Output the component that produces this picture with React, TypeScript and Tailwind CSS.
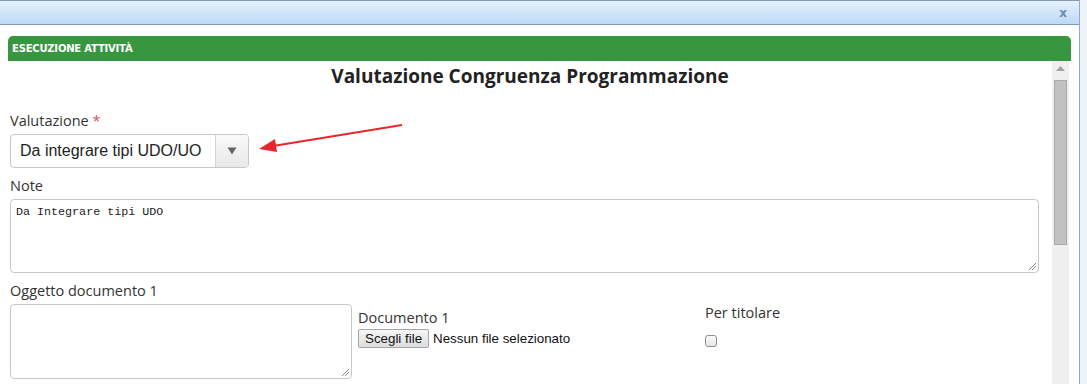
import React from 'react'

const labelFont = { fontFamily: '"Open Sans", "Noto Sans", sans-serif' }

export default function App() {
  return (
    <div className="w-[1087px] h-[384px] overflow-hidden bg-[#eef3fa]">
      <div className="w-[1080px] h-full bg-white border-r border-[#8fa9c6] flex flex-col">
        {/* Title bar */}
        <div className="h-[25px] shrink-0 border-t border-b border-[#7f9db9] bg-gradient-to-b from-[#e6f1fc] to-[#bcdaf8] flex items-center justify-end pr-[12px]">
          <span className="text-[12px] font-bold text-[#6b8bae] leading-none" style={{ fontFamily: '"DejaVu Sans", sans-serif' }}>x</span>
        </div>

        <div className="pl-2 pr-[8px] pt-[11px] flex-1 flex flex-col min-h-0">
          {/* Green panel header */}
          <div className="h-[25px] shrink-0 rounded-t-[5px] bg-[#37963f] flex items-center pl-[4px]">
            <span className="text-white text-[10px] font-bold tracking-[-0.2px]" style={{ fontFamily: '"DejaVu Sans", Verdana, sans-serif' }}>
              ESECUZIONE ATTIVITÀ
            </span>
          </div>

          <div className="flex flex-1 min-h-0">
            <div className="flex-1 pl-[2px] pr-[13px] text-[14.5px]" style={labelFont}>
              <h1 className="-mr-[11px] text-center text-[19px] leading-[28px] font-bold text-[#222] pt-[1px]" style={{ fontFamily: '"Open Sans", sans-serif' }}>
                Valutazione Congruenza Programmazione
              </h1>

              {/* Valutazione */}
              <div className="mt-[21px] leading-[20px] text-[#333]">
                Valutazione <span className="text-[#d9534f]">*</span>
              </div>
              <div className="relative mt-[3px] w-[239px]">
                <div className="h-[34px] rounded-[4px] border border-[#c8c8c8] flex items-stretch overflow-hidden">
                  <div className="flex-1 flex items-center pl-[9px] text-[16px] text-[#222]" style={{ fontFamily: '"Liberation Sans", Arial, sans-serif' }}>
                    Da integrare tipi UDO/UO
                  </div>
                  <div className="w-[33px] border-l border-[#d4d4d4] bg-gradient-to-b from-[#fafafa] to-[#e8e8e8] flex items-center justify-center">
                    <svg width="10" height="8" viewBox="0 0 10 8">
                      <path d="M0.5 0.5 L9.5 0.5 L5 7.5 Z" fill="#666" />
                    </svg>
                  </div>
                </div>
                {/* Red annotation arrow */}
                <svg className="absolute left-[245px] top-[-10px]" width="150" height="30" viewBox="0 0 150 30">
                  <line x1="147" y1="1" x2="18" y2="22" stroke="#e8262b" strokeWidth="2" />
                  <path d="M4 25 L20 15 L22 28 Z" fill="#e8262b" />
                </svg>
              </div>

              {/* Note */}
              <div className="mt-[8px] leading-[20px] text-[#333]">Note</div>
              <div className="relative mt-[3px] h-[74px] rounded-[4px] border border-[#c8c8c8] px-[5px] pt-[5px]">
                <div className="text-[11.7px] leading-[14px] text-[#222]" style={{ fontFamily: '"Liberation Mono", monospace' }}>Da Integrare tipi UDO</div>
                <ResizeGrip />
              </div>

              {/* Oggetto documento */}
              <div className="mt-[8px] leading-[20px] text-[#333]">Oggetto documento 1</div>
              <div className="mt-[3px] flex">
                <div className="relative w-[342px] h-[75px] rounded-[4px] border border-[#c8c8c8]">
                  <ResizeGrip />
                </div>
                <div className="ml-[6px] pt-[4px] w-[347px]">
                  <div className="leading-[20px] text-[#333]">Documento 1</div>
                  <div className="mt-[1px] flex items-center" style={{ fontFamily: '"Liberation Sans", Arial, sans-serif' }}>
                    <button className="h-[19px] px-[6px] text-[13.33px] leading-none text-[#111] border border-[#a6a6a6] rounded-[2px] bg-gradient-to-b from-[#f6f6f6] to-[#dddddd]">
                      Scegli file
                    </button>
                    <span className="ml-[4px] text-[13.33px] text-[#111]">Nessun file selezionato</span>
                  </div>
                </div>
                <div>
                  <div className="-mt-[1px] leading-[20px] text-[#333]">Per titolare</div>
                  <div className="mt-[12px] w-[12px] h-[12px] rounded-[3px] border border-[#8f8f8f] bg-gradient-to-b from-[#fcfcfc] to-[#e6e6e6]" />
                </div>
              </div>
            </div>

            {/* Scrollbar */}
            <div className="w-[17px] mr-[2px] bg-[#f0f0f0] flex flex-col items-center">
              <svg className="mt-[5px]" width="9" height="5" viewBox="0 0 9 5">
                <path d="M0 5 L4.5 0 L9 5 Z" fill="#a3a3a3" />
              </svg>
              <div className="mt-[9px] w-[13px] h-[165px] bg-[#c1c1c1] border border-[#a8a8a8]" />
            </div>
          </div>
        </div>
      </div>
    </div>
  )
}

function ResizeGrip() {
  return (
    <svg className="absolute right-[2px] bottom-[2px]" width="8" height="8" viewBox="0 0 8 8">
      <line x1="1" y1="8" x2="8" y2="1" stroke="#888" strokeWidth="1" />
      <line x1="4" y1="8" x2="8" y2="4" stroke="#888" strokeWidth="1" />
    </svg>
  )
}
